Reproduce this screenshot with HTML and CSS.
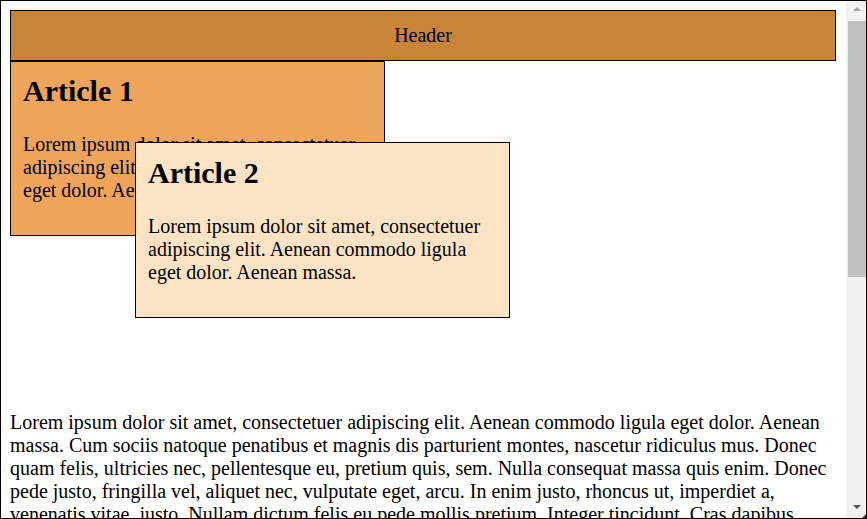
FILE: index.html
```html
<!DOCTYPE html>
<html lang="en">
<head>
<meta charset="utf-8">
<title>Positioning</title>
<link rel="stylesheet" href="styles.css">
</head>
<body>
<div class="frame">
  <div class="page">
    <header class="header">Header</header>
    <article class="article article-one">
      <h1>Article 1</h1>
      <p>Lorem ipsum dolor sit amet, consectetuer adipiscing elit. Aenean commodo ligula eget dolor. Aenean massa.</p>
    </article>
    <article class="article article-two">
      <h1>Article 2</h1>
      <p>Lorem ipsum dolor sit amet, consectetuer adipiscing elit. Aenean commodo ligula eget dolor. Aenean massa.</p>
    </article>
    <p class="body-text">Lorem ipsum dolor sit amet, consectetuer adipiscing elit. Aenean commodo ligula eget dolor. Aenean massa. Cum sociis natoque penatibus et magnis dis parturient montes, nascetur ridiculus mus. Donec quam felis, ultricies nec, pellentesque eu, pretium quis, sem. Nulla consequat massa quis enim. Donec pede justo, fringilla vel, aliquet nec, vulputate eget, arcu. In enim justo, rhoncus ut, imperdiet a, venenatis vitae, justo. Nullam dictum felis eu pede mollis pretium. Integer tincidunt. Cras dapibus. Vivamus elementum semper nisi. Aenean vulputate eleifend tellus.</p>
  </div>
  <div class="scrollbar">
    <div class="sb-btn"><span class="arrow-up"></span></div>
    <div class="sb-thumb"></div>
    <div class="sb-track"></div>
    <div class="sb-btn sb-btn-bottom"><span class="arrow-down"></span></div>
    <span class="grip"></span>
  </div>
</div>
</body>
</html>
```

FILE: styles.css
```css
html, body {
  margin: 0;
  padding: 0;
  background: #ffffff;
}

.frame {
  width: 867px;
  height: 519px;
  box-sizing: border-box;
  border: 1px solid #000000;
  display: flex;
  overflow: hidden;
  position: relative;
  font-family: "Liberation Serif", "Times New Roman", serif;
  font-size: 20px;
  line-height: 23px;
  color: #000000;
}

.page {
  flex: 1;
  min-width: 0;
  overflow: hidden;
  padding: 9px 10px 0 9px;
}

.header {
  border: 1px solid #000000;
  background: #c8853a;
  text-align: center;
  padding: 13px 0 13px;
}

.article {
  width: 375px;
  box-sizing: border-box;
  border: 1px solid #000000;
  padding: 12px 12px 13px;
}

.article h1 {
  font-size: 30px;
  line-height: 34px;
  font-weight: bold;
  margin: 0 0 25px;
}

.article p {
  margin: 0 0 20px;
}

.article-one {
  background: #eea55b;
}

.article-two {
  background: #fce3c3;
  position: relative;
  left: 125px;
  top: -94px;
  padding-top: 13px;
  margin-bottom: -1px;
}

.body-text {
  margin: 0;
}

.scrollbar {
  width: 20px;
  flex: none;
  background: #f1f1f1;
  display: flex;
  flex-direction: column;
  position: relative;
}

.sb-btn {
  height: 20px;
  display: flex;
  justify-content: center;
  align-items: center;
  flex: none;
}

.sb-btn-bottom {
  height: 20px;
  padding-left: 2px;
}

.arrow-up {
  width: 0;
  height: 0;
  margin-left: 2px;
  margin-bottom: 5px;
  border-left: 4px solid transparent;
  border-right: 4px solid transparent;
  border-bottom: 4px solid #a3a3a3;
}

.arrow-down {
  width: 0;
  height: 0;
  margin-bottom: 2px;
  border-left: 4px solid transparent;
  border-right: 4px solid transparent;
  border-top: 4px solid #505050;
}

.sb-thumb {
  height: 256px;
  margin-left: 2px;
  background: #c1c1c1;
  flex: none;
}

.sb-track {
  flex: 1;
}

.grip {
  position: absolute;
  right: 0;
  bottom: 0;
  width: 0;
  height: 0;
  border-left: 4px solid transparent;
  border-bottom: 4px solid #404040;
}
```
